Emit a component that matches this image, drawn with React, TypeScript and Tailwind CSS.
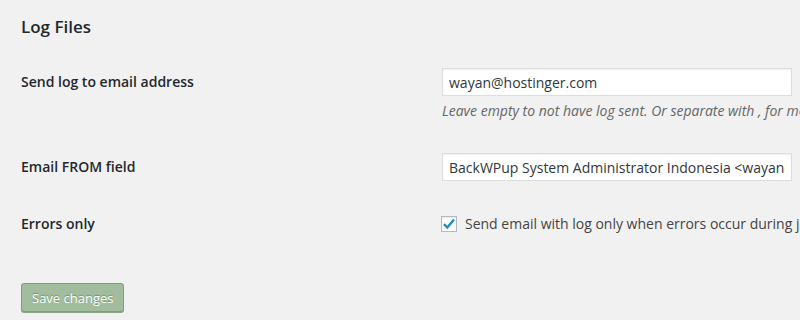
export default function App() {
  return (
    <div className="w-[800px] h-[320px] overflow-hidden bg-[#f1f1f1] pl-[21px] text-[#23282d] font-['Open_Sans',sans-serif] whitespace-nowrap">
      <h2 className="pt-[15px] text-[17px] leading-[23px] font-semibold">Log Files</h2>

      {/* email address */}
      <div className="mt-[30px] grid grid-cols-[421px_1fr]">
        <div className="text-[14px] leading-[28px] font-semibold">Send log to email address</div>
        <div>
          <input
            readOnly
            value="wayan@hostinger.com"
            className="w-[350px] h-[28px] border border-[#ddd] bg-white px-[6px] text-[14px] text-[#32373c] shadow-[inset_0_1px_2px_rgba(0,0,0,0.07)] outline-none font-['Open_Sans',sans-serif]"
          />
          <p className="mt-[5px] text-[14px] leading-[20px] italic text-[#666]">
            Leave empty to not have log sent. Or separate with , for more than one receiver.
          </p>
        </div>
      </div>

      {/* from field */}
      <div className="mt-[32px] grid grid-cols-[421px_1fr]">
        <div className="text-[14px] leading-[28px] font-semibold">Email FROM field</div>
        <input
          readOnly
          value="BackWPup System Administrator Indonesia <wayan@hostinger.com>"
          className="w-[350px] h-[28px] border border-[#ddd] bg-white px-[6px] text-[14px] text-[#32373c] shadow-[inset_0_1px_2px_rgba(0,0,0,0.07)] outline-none font-['Open_Sans',sans-serif]"
        />
      </div>

      {/* errors only */}
      <div className="mt-[29px] grid grid-cols-[421px_1fr]">
        <div className="text-[14px] leading-[28px] font-semibold">Errors only</div>
        <label className="flex items-center gap-[8px] -ml-px text-[14px] leading-[28px] text-[#444]">
          <span className="w-[16px] h-[16px] shrink-0 border border-[#b4b9be] bg-white shadow-[inset_0_1px_2px_rgba(0,0,0,0.1)] flex items-center justify-center">
            <svg width="14" height="14" viewBox="0 0 14 14">
              <path d="M2 7.2 L5.3 10.5 L12 2.5" fill="none" stroke="#1e8cbe" strokeWidth="2.4" />
            </svg>
          </span>
          Send email with log only when errors occur during job execution.
        </label>
      </div>

      <button className="mt-[45px] h-[29px] px-[10px] rounded-[3px] border border-[#7f9e7b] bg-[#a2bd9e] text-[13px] leading-[26px] text-white [text-shadow:0_-1px_1px_#6f8f6b] shadow-[0_1px_0_#8aa886]">
        Save changes
      </button>
    </div>
  );
}
